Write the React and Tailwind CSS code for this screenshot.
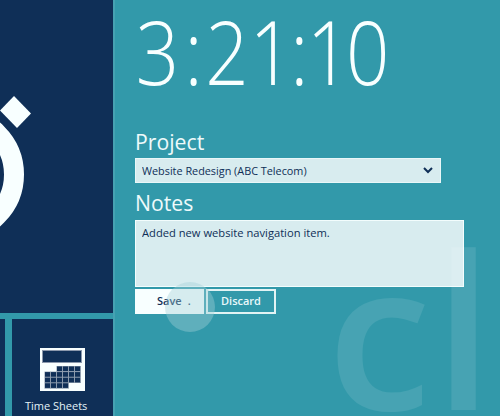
import React from "react";

const KEYS = [
  [2, 3, 4, 5],
  [0, 1, 2, 3, 4, 5],
  [0, 1, 2, 3, 4, 5],
  [0, 1, 2, 3],
];

function Stopwatch() {
  return (
    <svg className="block h-[313px] w-[113px]" viewBox="0 0 113 313">
      <circle cx="-44" cy="174.5" r="58" fill="none" stroke="#f8ffff" strokeWidth="20" />
      <path d="M14 96 31 113.5 17 128 0 110.5Z" fill="#f8ffff" />
    </svg>
  );
}

function Calculator() {
  return (
    <svg className="block h-[43px] w-[45px]" viewBox="0 0 45 43">
      <rect width="45" height="43" fill="#f8ffff" />
      <rect x="2.5" y="2.5" width="39" height="12" fill="#0f2f57" stroke="#8b98ac" />
      {KEYS.map((row, r) =>
        row.map((c) => (
          <g key={r + "-" + c}>
            <rect x={4.5 + c * 6} y={18 + r * 5.6} width="6.4" height="5.8" fill="#8595a8" />
            <rect x={5 + c * 6} y={18.5 + r * 5.6} width="5" height="4.6" fill="#0f2f57" />
          </g>
        ))
      )}
    </svg>
  );
}

function Sidebar() {
  return (
    <aside className="flex h-full w-[115px] shrink-0 flex-col gap-[6px] border-r-2 border-[#46a2b2]">
      <div className="h-[313px] bg-[#0f2f57]">
        <Stopwatch />
      </div>
      <div className="flex flex-1 gap-[7px]">
        <div className="w-[5px] bg-[#0f2f57]" />
        <div className="flex flex-1 flex-col bg-[#0f2f57] pl-[28px] pt-[29px]">
          <Calculator />
          <span className="-ml-[15px] mt-[7px] origin-left whitespace-nowrap text-[11px] leading-[16px] font-medium text-[#e4f3f7]">
            Time Sheets
          </span>
        </div>
      </div>
    </aside>
  );
}

function Timer() {
  return (
    <div className="h-[128px] w-max origin-left scale-x-[0.855] whitespace-nowrap pl-px pt-px text-[89px] font-[350] leading-[100px] text-[#f8ffff]">
      <span className="tracking-[6px]">3</span>
      <span className="tracking-[3px]">:</span>
      <span className="tracking-[1px]">2</span>
      <span className="tracking-[-3px]">1</span>
      <span className="tracking-[-2px]">:</span>
      <span className="tracking-[-5px]">1</span>
      <span>0</span>
    </div>
  );
}

export default function App() {
  return (
    <div className="relative flex h-[416px] w-[500px] overflow-hidden bg-[#3299aa] font-['Open_Sans','Noto_Sans',sans-serif]">
      <Sidebar />
      <main className="flex flex-1 flex-col items-start pl-[20px]">
        <Timer />
        <label className="h-[30px] origin-left scale-x-[0.965] text-[22px] leading-[27px] font-[370] text-[#eefafb]">Project</label>
        <div className="flex h-[25px] w-[306px] items-center justify-between border border-[#e9f7f8] bg-[#d8ecef] pl-[6px] pr-[7px] text-[#0f2f57]">
          <span className="origin-left scale-x-[0.985] whitespace-nowrap text-[11px] leading-none font-medium">Website Redesign (ABC Telecom)</span>
          <svg className="h-[8px] w-[10px]" viewBox="0 0 10 8">
            <path d="M1 1 5 5 9 1" fill="none" stroke="currentColor" strokeWidth="2" />
          </svg>
        </div>
        <label className="mt-[6px] h-[31px] origin-left scale-x-[0.965] text-[22px] leading-[27px] font-[370] text-[#eefafb]">Notes</label>
        <div className="h-[67px] w-[329px] border border-[#f3fdfd] bg-[#d8ecef] pl-[6px] pt-[4px] text-[#0f2f57]">
          <div className="w-max origin-left scale-x-[1.015] text-[11px] leading-[15px] font-medium">Added new website navigation item.</div>
        </div>
        <div className="mt-[2px] flex items-start gap-[2px]">
          <div className="flex h-[25px] w-[69px] items-center bg-[#f8ffff] pl-[22px] text-[11px] font-semibold text-[#0f2f57]">
            Save<span className="ml-[6px]">.</span>
          </div>
          <div className="flex h-[25px] w-[70px] items-center justify-center border-2 border-[#e2f3f4] text-[11px] font-semibold text-[#e9f8fa]">
            Discard
          </div>
        </div>
      </main>
      <div className="absolute left-[165px] top-[282px] h-[50px] w-[50px] rounded-full bg-[#a2d0d8]/40" />
      <div className="pointer-events-none absolute left-[327px] top-[244px] flex gap-[3px] whitespace-nowrap text-[210px] font-semibold leading-[170px] text-white/10">
        <span className="origin-bottom scale-y-[0.97]">c</span>
        <span className="origin-bottom scale-y-[1.02]">l</span>
      </div>
    </div>
  );
}
